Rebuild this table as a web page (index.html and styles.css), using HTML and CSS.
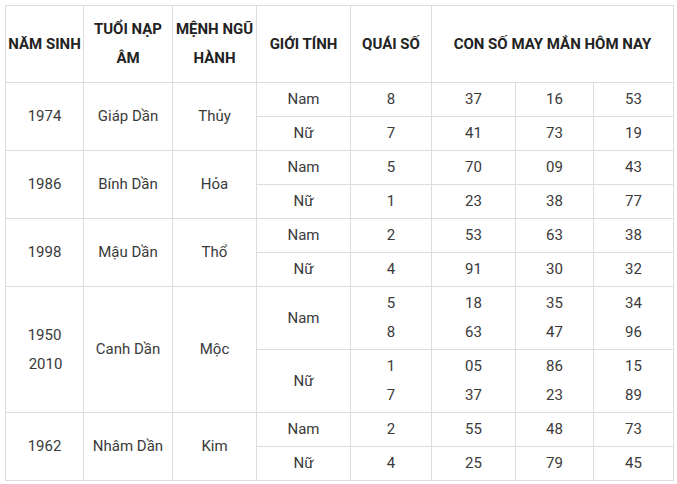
FILE: index.html
```html
<!DOCTYPE html>
<html lang="vi">
<head>
<meta charset="utf-8">
<link rel="stylesheet" href="styles.css">
</head>
<body>
<div class="wrap">
<table class="lucky">
  <colgroup>
    <col class="c1"><col class="c2"><col class="c3"><col class="c4"><col class="c5"><col class="c6"><col class="c7"><col class="c8">
  </colgroup>
  <thead>
    <tr class="head">
      <th>NĂM SINH</th>
      <th>TUỔI NẠP ÂM</th>
      <th>MỆNH NGŨ HÀNH</th>
      <th>GIỚI TÍNH</th>
      <th>QUÁI SỐ</th>
      <th colspan="3">CON SỐ MAY MẮN HÔM NAY</th>
    </tr>
  </thead>
  <tbody>
    <tr class="r1"><td rowspan="2">1974</td><td rowspan="2">Giáp Dần</td><td rowspan="2">Thủy</td><td>Nam</td><td>8</td><td>37</td><td>16</td><td>53</td></tr>
    <tr class="r1"><td>Nữ</td><td>7</td><td>41</td><td>73</td><td>19</td></tr>
    <tr class="r1"><td rowspan="2">1986</td><td rowspan="2">Bính Dần</td><td rowspan="2">Hỏa</td><td>Nam</td><td>5</td><td>70</td><td>09</td><td>43</td></tr>
    <tr class="r1"><td>Nữ</td><td>1</td><td>23</td><td>38</td><td>77</td></tr>
    <tr class="r1"><td rowspan="2">1998</td><td rowspan="2">Mậu Dần</td><td rowspan="2">Thổ</td><td>Nam</td><td>2</td><td>53</td><td>63</td><td>38</td></tr>
    <tr class="r1"><td>Nữ</td><td>4</td><td>91</td><td>30</td><td>32</td></tr>
    <tr class="r2"><td rowspan="2">1950<br><span class="ind">2010</span></td><td rowspan="2">Canh Dần</td><td rowspan="2">Mộc</td><td>Nam</td><td>5<br>8</td><td>18<br>63</td><td>35<br>47</td><td>34<br>96</td></tr>
    <tr class="r2"><td>Nữ</td><td>1<br>7</td><td>05<br>37</td><td>86<br>23</td><td>15<br>89</td></tr>
    <tr class="r1"><td rowspan="2">1962</td><td rowspan="2">Nhâm Dần</td><td rowspan="2">Kim</td><td>Nam</td><td>2</td><td>55</td><td>48</td><td>73</td></tr>
    <tr class="r1"><td>Nữ</td><td>4</td><td>25</td><td>79</td><td>45</td></tr>
  </tbody>
</table>
</div>
</body>
</html>
```
FILE: styles.css
```css
html, body {
  margin: 0;
  padding: 0;
  background: #fff;
}
.wrap {
  padding: 5px 0 0 5px;
}
.lucky {
  border-collapse: collapse;
  table-layout: fixed;
  width: 668px;
  font-family: Roboto, "Noto Sans", sans-serif;
  font-size: 15px;
  line-height: 29px;
  color: #3a3a3a;
}
.c1 { width: 78px; }
.c2 { width: 89px; }
.c3 { width: 84px; }
.c4 { width: 94px; }
.c5 { width: 81px; }
.c6 { width: 84px; }
.c7 { width: 78px; }
.c8 { width: 80px; }
.lucky th,
.lucky td {
  border: 1px solid #dcdcdc;
  padding: 0 2px;
  text-align: center;
  vertical-align: middle;
}
.lucky th {
  font-weight: 700;
  color: #222;
}
.head th { height: 76px; }
.r1 td { height: 33px; }
.r2 td { height: 62px; }
.ind { padding-left: 2px; }
```
